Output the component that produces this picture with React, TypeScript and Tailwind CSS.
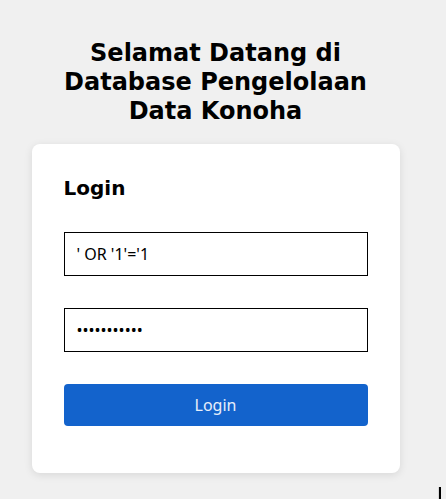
import React from "react";

export default function App() {
  return (
    <div className="min-h-[499px] w-[446px] bg-[#f0f0f0] relative overflow-hidden" style={{ fontFamily: '"DejaVu Sans", sans-serif' }}>
      <div className="w-[431px] pt-[39px]">
        <div className="w-[368px] mx-auto">
          <h1 className="text-center text-[24px] leading-[28.8px] font-bold text-black">
            Selamat Datang di Database Pengelolaan Data Konoha
          </h1>
          <div className="mt-[19px] bg-white rounded-lg shadow-[0_2px_8px_rgba(0,0,0,0.1)] px-8 pt-8 pb-[47px]">
            <h2 className="text-[20px] leading-[24px] font-bold text-black">Login</h2>
            <form className="mt-8 flex flex-col gap-8" onSubmit={(e) => e.preventDefault()}>
              <input
                type="text"
                defaultValue="' OR '1'='1"
                className="block w-full h-[44px] border border-black px-3 text-[16px] text-black bg-white outline-none"
                style={{ fontFamily: '"Noto Sans", sans-serif' }}
              />
              <input
                type="password"
                defaultValue="abcdefghijk"
                className="block w-full h-[44px] border border-black px-3 text-[16px] text-black bg-white outline-none"
                style={{ fontFamily: '"Noto Sans", sans-serif' }}
              />
              <button
                type="submit"
                className="block w-full h-[42px] rounded bg-[#1363cc] text-[16px] text-white/90"
                style={{ fontFamily: '"Noto Sans", sans-serif' }}
              >
                Login
              </button>
            </form>
          </div>
        </div>
      </div>
      <div className="absolute left-[438px] top-[487px] w-[3px] h-[12px] bg-black border-l border-[#d8d8d8]" />
    </div>
  );
}
